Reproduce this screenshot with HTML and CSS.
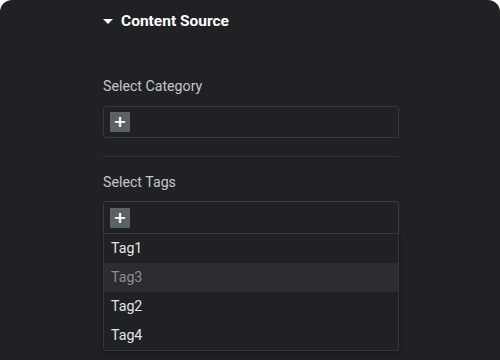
FILE: index.html
```html
<!DOCTYPE html>
<html lang="en">
<head>
  <meta charset="UTF-8" />
  <meta name="viewport" content="width=device-width, initial-scale=1.0" />
  <title>Content Source</title>
  <link rel="stylesheet" href="styles.css">
</head>
<body>
  <div class="panel">
    <div class="section-title">
      <span class="caret"></span>
      <span>Content Source</span>
    </div>

    <div class="control">
      <label class="control-label">Select Category</label>
      <div class="select-box">
        <button class="add-btn">+</button>
      </div>
    </div>

    <hr class="separator" />

    <div class="control">
      <label class="control-label">Select Tags</label>
      <div class="select-box open">
        <button class="add-btn">+</button>
      </div>
      <ul class="dropdown">
        <li>Tag1</li>
        <li class="active">Tag3</li>
        <li>Tag2</li>
        <li>Tag4</li>
      </ul>
    </div>
  </div>
</body>
</html>
```

FILE: styles.css
```css
body {
  margin: 0;
  background: #ffffff;
  font-family: Roboto, "Liberation Sans", Arial, sans-serif;
}
.panel {
  width: 500px;
  height: 360px;
  box-sizing: border-box;
  background: #202124;
  border-radius: 12px 12px 0 0;
  padding: 11px 101px 0 103px;
  overflow: hidden;
}
.section-title {
  display: flex;
  align-items: center;
  gap: 8px;
  height: 20px;
  font-size: 15.5px;
  font-weight: bold;
  color: #ffffff;
}
/* small triangle before the title */
.caret {
  width: 0;
  height: 0;
  border-left: 5px solid transparent;
  border-right: 5px solid transparent;
  border-top: 5px solid #ffffff;
  margin-top: 1px;
}
.control {
  display: flex;
  flex-direction: column;
}
.control-label {
  font-size: 14.2px;
  line-height: 16px;
  color: #c5c6c8;
  margin: 47px 0 12px;
}
.separator + .control .control-label {
  margin-top: 17px;
}
.select-box {
  height: 32px;
  border: 1px solid #37383c;
  border-radius: 3px;
  display: flex;
  align-items: center;
  padding: 0 6px;
  box-sizing: border-box;
}
.select-box.open {
  border-color: #3b3c40;
  border-radius: 3px 3px 0 0;
  height: 33px;
  margin-top: -1px;
}
.add-btn {
  width: 20px;
  height: 20px;
  padding: 0;
  border: none;
  border-radius: 1px;
  background: #5c6067;
  color: #ffffff;
  font-family: "DejaVu Sans", sans-serif;
  font-size: 16px;
  font-weight: bold;
  line-height: 20px;
  text-align: center;
}
.separator {
  border: none;
  border-top: 1px solid #2f3034;
  margin: 18px 0 0;
}
.dropdown {
  list-style: none;
  margin: 0;
  padding: 0;
  border: 1px solid #36373b;
  border-top: none;
  border-radius: 0 0 3px 3px;
  background: #202125;
  box-shadow: 0 2px 4px rgba(0, 0, 0, 0.35);
}
.dropdown li {
  height: 29px;
  line-height: 29px;
  padding: 0 7px;
  font-size: 14.2px;
  color: #e3e3e4;
}
.dropdown li.active {
  background: #2c2d31;
  color: #8d8e91;
}
```
